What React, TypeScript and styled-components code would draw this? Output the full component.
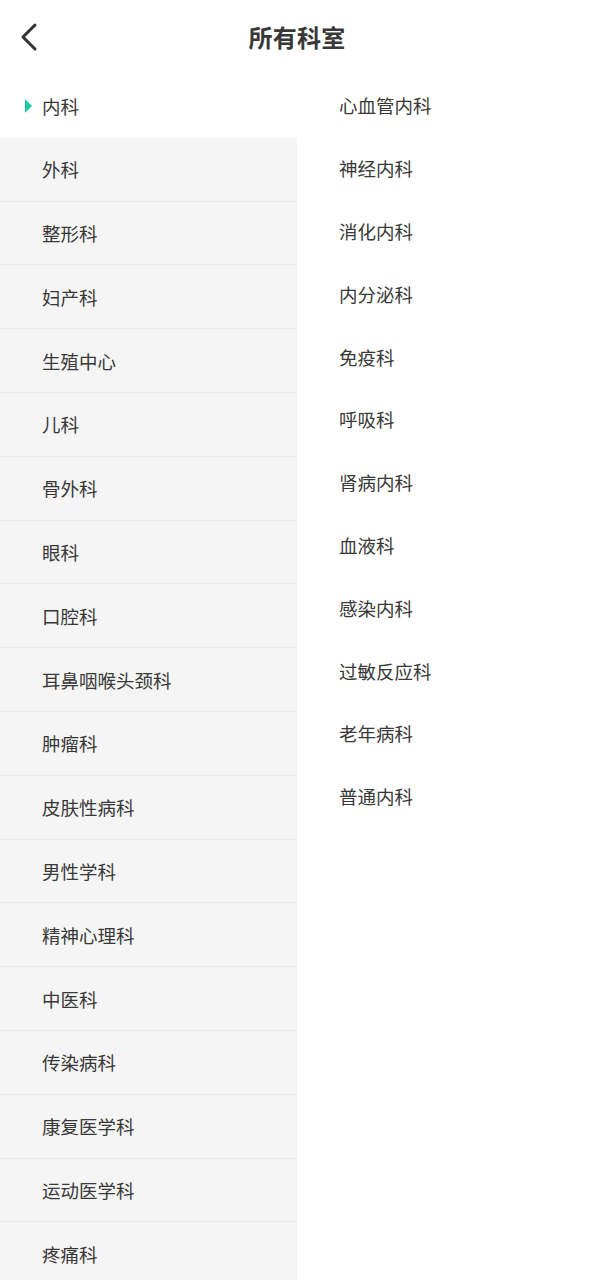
import styled, { createGlobalStyle } from "styled-components";

const GlobalStyle = createGlobalStyle`
  html, body {
    margin: 0;
    padding: 0;
    background: #ffffff;
  }

  body {
    font-family: "Noto Sans CJK SC", "Noto Sans", sans-serif;
    color: #333333;
  }
`;

const departments = [
  "内科",
  "外科",
  "整形科",
  "妇产科",
  "生殖中心",
  "儿科",
  "骨外科",
  "眼科",
  "口腔科",
  "耳鼻咽喉头颈科",
  "肿瘤科",
  "皮肤性病科",
  "男性学科",
  "精神心理科",
  "中医科",
  "传染病科",
  "康复医学科",
  "运动医学科",
  "疼痛科",
];

const subDepartments = [
  "心血管内科",
  "神经内科",
  "消化内科",
  "内分泌科",
  "免疫科",
  "呼吸科",
  "肾病内科",
  "血液科",
  "感染内科",
  "过敏反应科",
  "老年病科",
  "普通内科",
];

const Page = styled.div`
  width: 594px;
  height: 1280px;
  overflow: hidden;
  display: flex;
  flex-direction: column;
  background: #ffffff;
`;

const Header = styled.header`
  height: 74px;
  flex-shrink: 0;
  display: flex;
  align-items: center;
  justify-content: center;
  position: relative;
`;

const BackButton = styled.button`
  position: absolute;
  left: 14px;
  top: 20px;
  width: 30px;
  height: 34px;
  padding: 0;
  border: none;
  background: transparent;
  display: flex;
  align-items: center;
  justify-content: center;
`;

const Title = styled.h1`
  margin: 0;
  margin-top: -1px;
  font-size: 24px;
  font-weight: 700;
  color: #383838;
  letter-spacing: 0.3px;
`;

const Body = styled.div`
  flex: 1;
  display: flex;
  min-height: 0;
`;

const LeftList = styled.ul`
  list-style: none;
  margin: 0;
  padding: 0;
  width: 297px;
  flex-shrink: 0;
  background: #f5f5f5;
`;

const LeftItem = styled.li<{ $active: boolean }>`
  position: relative;
  height: 63.8px;
  box-sizing: border-box;
  display: flex;
  align-items: center;
  padding-left: 42px;
  font-size: 18.5px;
  color: #383838;
  background: ${(p) => (p.$active ? "#ffffff" : "#f5f5f5")};
  border-bottom: ${(p) => (p.$active ? "none" : "1px solid #e9e9e9")};
`;

const Marker = styled.span`
  position: absolute;
  left: 25px;
  top: 50%;
  margin-top: -7px;
  width: 0;
  height: 0;
  border-top: 7px solid transparent;
  border-bottom: 7px solid transparent;
  border-left: 7px solid #1ccaa8;
`;

const RightList = styled.ul`
  list-style: none;
  margin: 0;
  padding: 0 0 0 42px;
  flex: 1;
`;

const RightItem = styled.li`
  height: 62.8px;
  display: flex;
  align-items: center;
  font-size: 18.5px;
  color: #383838;
`;

const App = () => {
  return (
    <Page>
      <GlobalStyle />
      <Header>
        <BackButton aria-label="返回">
          <svg width="20" height="30" viewBox="0 0 20 30">
            <path
              d="M16 3 L4 15 L16 27"
              fill="none"
              stroke="#333333"
              strokeWidth="3"
              strokeLinecap="round"
              strokeLinejoin="round"
            />
          </svg>
        </BackButton>
        <Title>所有科室</Title>
      </Header>
      <Body>
        <LeftList>
          {departments.map((name, index) => (
            <LeftItem key={name} $active={index === 0}>
              {index === 0 ? <Marker /> : null}
              {name}
            </LeftItem>
          ))}
        </LeftList>
        <RightList>
          {subDepartments.map((name) => (
            <RightItem key={name}>{name}</RightItem>
          ))}
        </RightList>
      </Body>
    </Page>
  );
};

export default App;
